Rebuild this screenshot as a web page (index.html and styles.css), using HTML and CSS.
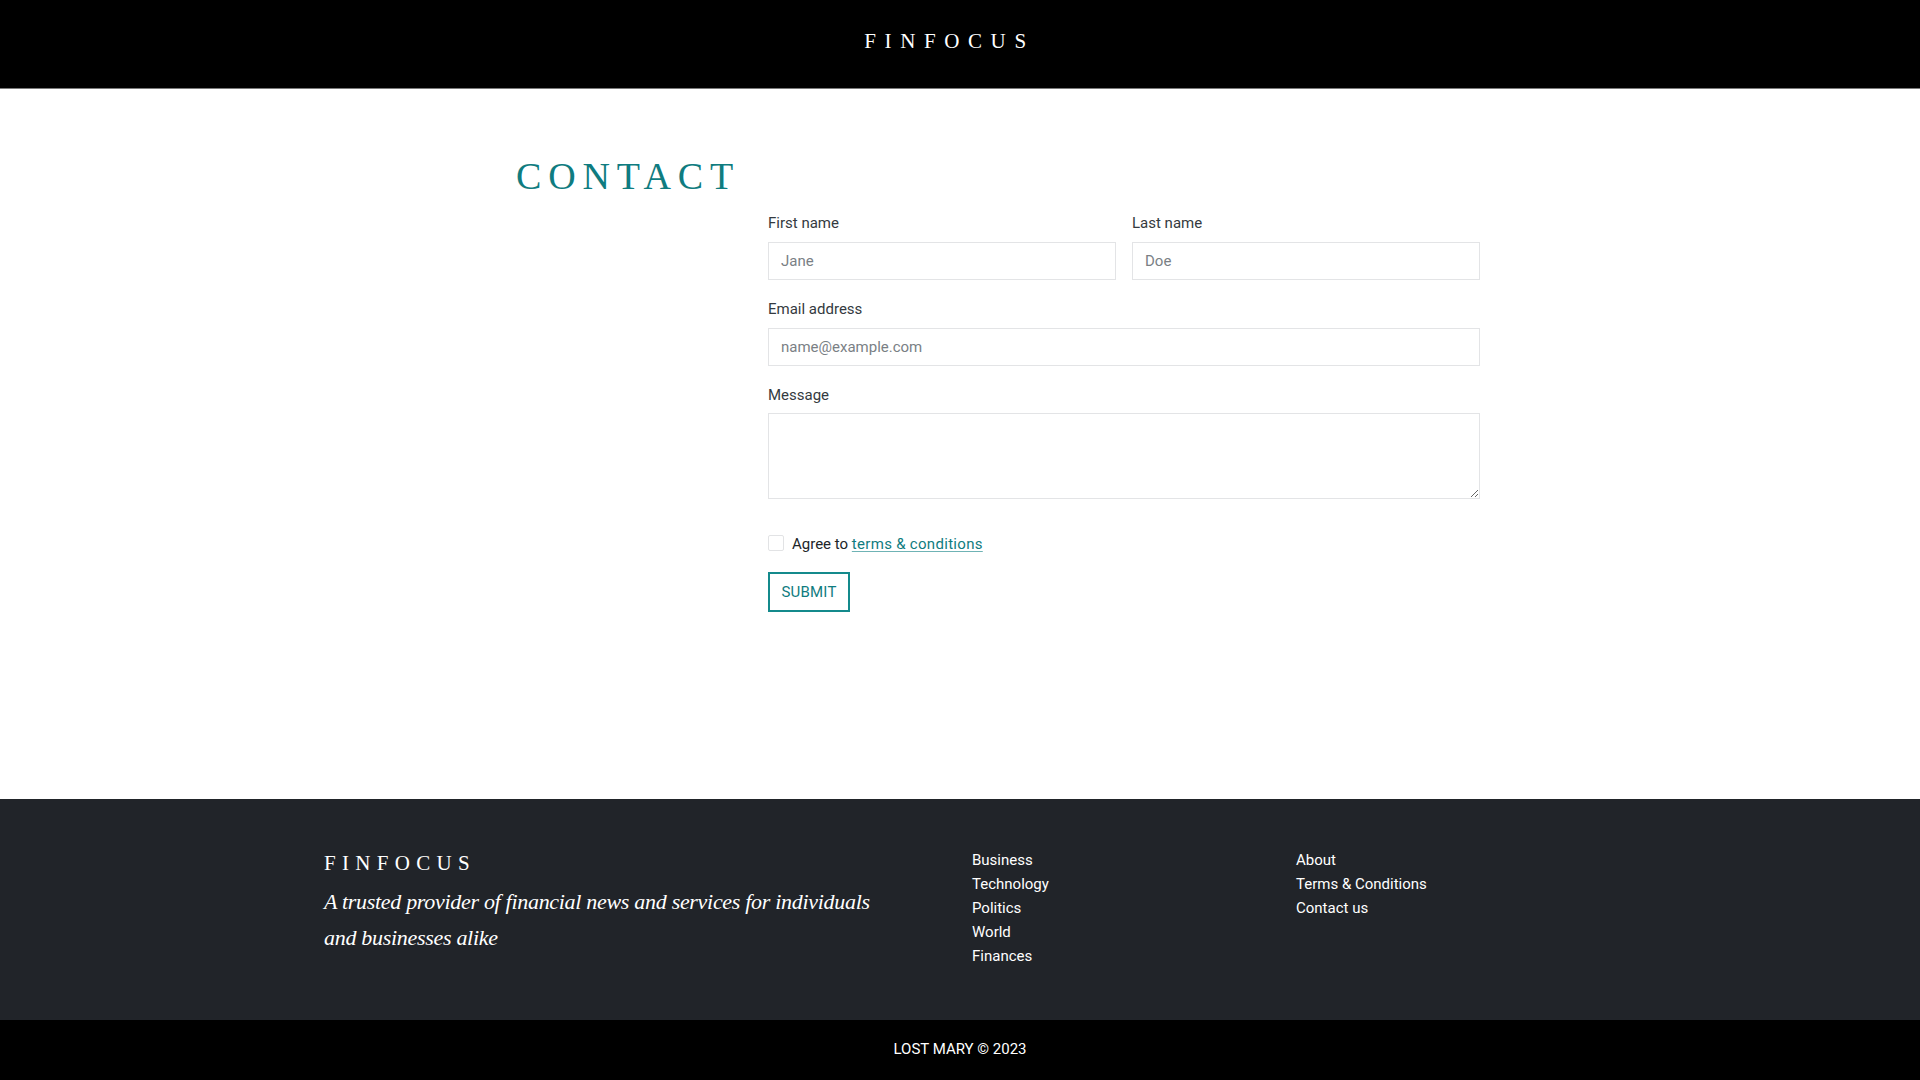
FILE: index.html
```html
<!DOCTYPE html>
<html lang="en">
<head>
<meta charset="utf-8">
<title>Contact - FinFocus</title>
<link rel="stylesheet" href="styles.css">
</head>
<body>
<header class="site-header">
  <a class="brand" href="#">FINFOCUS</a>
</header>
<main class="main">
  <div class="contact">
    <h1 class="contact-title">CONTACT</h1>
    <form class="contact-form">
      <div class="row-2">
        <div class="field">
          <label class="label" for="fn">First name</label>
          <input class="input" id="fn" type="text" placeholder="Jane">
        </div>
        <div class="field">
          <label class="label" for="ln">Last name</label>
          <input class="input" id="ln" type="text" placeholder="Doe">
        </div>
      </div>
      <div class="field">
        <label class="label" for="em">Email address</label>
        <input class="input" id="em" type="email" placeholder="name@example.com">
      </div>
      <div class="field">
        <label class="label" for="msg">Message</label>
        <textarea class="input textarea" id="msg"></textarea>
      </div>
      <div class="check">
        <input class="checkbox" type="checkbox" id="agree">
        <label for="agree" class="check-label">Agree to <a href="#" class="link">terms &amp; conditions</a></label>
      </div>
      <button type="button" class="submit">SUBMIT</button>
    </form>
  </div>
</main>
<footer class="footer">
  <div class="footer-inner">
    <div class="footer-brand">
      <div class="footer-logo">FINFOCUS</div>
      <p class="tagline">A trusted provider of financial news and services for individuals and businesses alike</p>
    </div>
    <ul class="footer-links">
      <li><a href="#">Business</a></li>
      <li><a href="#">Technology</a></li>
      <li><a href="#">Politics</a></li>
      <li><a href="#">World</a></li>
      <li><a href="#">Finances</a></li>
    </ul>
    <ul class="footer-links">
      <li><a href="#">About</a></li>
      <li><a href="#">Terms &amp; Conditions</a></li>
      <li><a href="#">Contact us</a></li>
    </ul>
  </div>
</footer>
<div class="copyright">LOST MARY © 2023</div>
</body>
</html>
```
FILE: styles.css
```css
* { box-sizing: border-box; }
html, body { margin: 0; padding: 0; }
body {
  min-height: 100vh;
  display: flex;
  flex-direction: column;
  font-family: Roboto, "Liberation Sans", sans-serif;
  font-size: 15px;
  color: #212529;
  background: #fff;
}
.site-header {
  height: 89px;
  background: #000;
  border-bottom: 1px solid #7a7a7a;
  display: flex;
  justify-content: center;
  padding-top: 28px;
}
.brand {
  font-family: "Liberation Serif", serif;
  font-size: 21px;
  line-height: 26px;
  letter-spacing: 8.6px;
  margin-right: 21px;
  color: #fff;
  text-decoration: none;
}
.main { flex: 1; }
.contact {
  width: 964px;
  margin-left: 516px;
  padding-top: 64px;
}
.contact-title {
  margin: 0;
  font-family: "Liberation Serif", serif;
  font-weight: 400;
  font-size: 38px;
  line-height: 46px;
  letter-spacing: 6.8px;
  color: #0f7c80;
}
.contact-form {
  margin-left: 252px;
  width: 712px;
  padding-top: 11px;
  display: flex;
  flex-direction: column;
}
.row-2 {
  display: grid;
  grid-template-columns: 1fr 1fr;
  gap: 16px;
}
.field {
  display: flex;
  flex-direction: column;
  margin-bottom: 16px;
}
.label {
  font-size: 15px;
  line-height: 22px;
  color: #343a40;
  padding-top: 2px;
  margin-bottom: 8px;
}
.input {
  height: 38px;
  border: 1px solid #e3e4e6;
  border-radius: 0;
  padding: 0 12px;
  font-family: Roboto, "Liberation Sans", sans-serif;
  font-size: 15px;
  color: #212529;
  background: #fff;
  outline: none;
}
.input::placeholder { color: #7a7f85; }
.textarea {
  height: 86px;
  resize: vertical;
  margin-top: -1px;
}
.check {
  display: flex;
  align-items: center;
  gap: 8px;
  margin-top: 18px;
  height: 22px;
}
.checkbox {
  appearance: none;
  -webkit-appearance: none;
  width: 16px;
  height: 16px;
  margin: 0 0 2px 0;
  border: 1px solid #e2e3e5;
  border-radius: 2px;
  background: #fff;
}
.check-label {
  font-size: 15px;
  color: #212529;
}
.link {
  color: #0f7c80;
  letter-spacing: 0.3px;
  text-decoration: underline;
  text-decoration-color: #6fb3b5;
  text-underline-offset: 2px;
}
.submit {
  align-self: flex-start;
  margin-top: 17px;
  width: 82px;
  height: 40px;
  border: 2px solid #148a8c;
  background: #fff;
  color: #0f7c80;
  font-family: Roboto, "Liberation Sans", sans-serif;
  font-size: 15px;
  letter-spacing: 0.2px;
  padding: 0;
  cursor: pointer;
}
.footer {
  background: #212429;
  color: #fff;
  padding: 50px 0 52px;
}
.footer-inner {
  width: 1296px;
  margin: 0 auto;
  display: grid;
  grid-template-columns: 648px 324px 324px;
}
.footer-inner > * { padding-left: 12px; }
.footer-logo {
  font-family: "Liberation Serif", serif;
  font-size: 21px;
  line-height: 26px;
  letter-spacing: 6.3px;
  margin-top: 1px;
}
.tagline {
  margin: 8px 0 0;
  font-family: "Liberation Serif", serif;
  font-style: italic;
  font-size: 22px;
  line-height: 36px;
  letter-spacing: -0.3px;
  max-width: 572px;
}
.footer-links {
  list-style: none;
  margin: -1px 0 0;
  padding-top: 0;
  padding-bottom: 0;
  padding-right: 0;
}
.footer-links li {
  line-height: 24px;
  font-size: 15px;
}
.footer-links a {
  color: #fff;
  text-decoration: none;
}
.copyright {
  height: 60px;
  background: #000;
  color: #fff;
  display: flex;
  align-items: center;
  justify-content: center;
  font-size: 15px;
  padding-bottom: 3px;
}
```
